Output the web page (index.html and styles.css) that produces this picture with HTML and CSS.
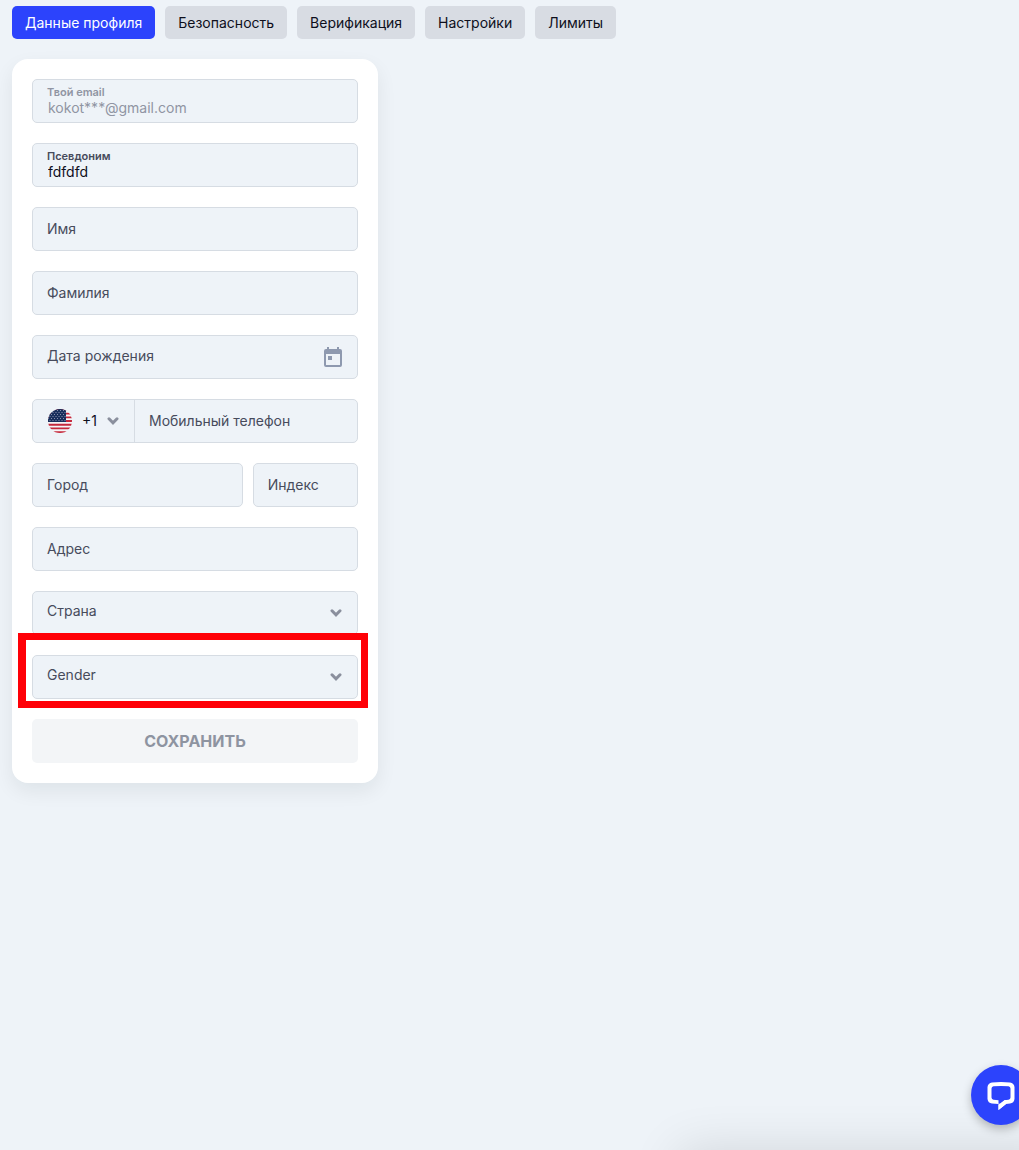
FILE: index.html
```html
<!DOCTYPE html>
<html lang="ru">
<head>
<meta charset="utf-8">
<meta name="viewport" content="width=device-width, initial-scale=1">
<title>Данные профиля</title>
<link rel="stylesheet" href="styles.css">
</head>
<body>
<nav class="tabs" aria-label="Профиль">
  <button type="button" class="tab tab-active">Данные профиля</button>
  <button type="button" class="tab">Безопасность</button>
  <button type="button" class="tab">Верификация</button>
  <button type="button" class="tab">Настройки</button>
  <button type="button" class="tab">Лимиты</button>
</nav>
<main>
  <form class="card">
    <div class="field filled disabled">
      <label for="email">Твой email</label>
      <input id="email" type="text" value="kokot***@gmail.com" disabled>
    </div>
    <div class="field filled">
      <label for="nick">Псевдоним</label>
      <input id="nick" type="text" value="fdfdfd">
    </div>
    <div class="field">
      <label for="name">Имя</label>
      <input id="name" type="text">
    </div>
    <div class="field">
      <label for="surname">Фамилия</label>
      <input id="surname" type="text">
    </div>
    <div class="field field-date">
      <label for="birth">Дата рождения</label>
      <input id="birth" type="text">
      <svg class="icon-end" width="24" height="24" viewBox="0 0 24 24" fill="#8e99af" aria-hidden="true"><path d="M19 4h-1V2h-2v2H8V2H6v2H5a2 2 0 0 0-2 2v14a2 2 0 0 0 2 2h14a2 2 0 0 0 2-2V6a2 2 0 0 0-2-2zm0 16H5V9h14v11zM7 11h4v4H7z"/></svg>
    </div>
    <div class="phone">
      <div class="code">
        <svg class="flag" width="24" height="24" viewBox="0 0 24 24" aria-hidden="true">
          <defs>
            <clipPath id="round"><circle cx="12" cy="12" r="12"/></clipPath>
            <pattern id="stars" width="3" height="4" patternUnits="userSpaceOnUse"><path d="M0 1h1v1H0zM1.500 3h1v1h-1z" fill="#8790ad"/></pattern>
          </defs>
          <g clip-path="url(#round)">
            <path fill="#f5f5f7" d="M0 0h24v24H0z"/>
            <path stroke="#c5283c" stroke-width="1.850" d="M0 .920h24M0 4.610h24M0 8.300h24M0 12h24M0 15.700h24M0 19.390h24M0 23.080h24"/>
            <path fill="#192f5d" d="M0 0h18v12.900H0z"/>
            <path fill="url(#stars)" d="M0 0h18v12H0z"/>
          </g>
        </svg>
        <select aria-label="Код страны"><option>+1</option></select>
        <svg class="chevron" width="12" height="8" viewBox="0 0 12 8" aria-hidden="true"><path d="M2 1.800l4 4L10 1.800"/></svg>
      </div>
      <div class="number">
        <label for="tel">Мобильный телефон</label>
        <input id="tel" type="tel">
      </div>
    </div>
    <div class="row">
      <div class="field">
        <label for="city">Город</label>
        <input id="city" type="text">
      </div>
      <div class="field">
        <label for="zip">Индекс</label>
        <input id="zip" type="text">
      </div>
    </div>
    <div class="field">
      <label for="address">Адрес</label>
      <input id="address" type="text">
    </div>
    <div class="field field-select">
      <label for="country">Страна</label>
      <select id="country"><option value=""></option></select>
      <svg class="chevron icon-end" width="12" height="8" viewBox="0 0 12 8" aria-hidden="true"><path d="M2 1.800l4 4L10 1.800"/></svg>
    </div>
    <div class="field field-select highlighted">
      <label for="gender">Gender</label>
      <select id="gender"><option value=""></option></select>
      <svg class="chevron icon-end" width="12" height="8" viewBox="0 0 12 8" aria-hidden="true"><path d="M2 1.800l4 4L10 1.800"/></svg>
    </div>
    <button type="submit" class="save" disabled>СОХРАНИТЬ</button>
  </form>
</main>
<div class="chat-window"></div>
<button type="button" class="chat" aria-label="Чат">
  <svg width="28" height="30" viewBox="0 0 28 30" aria-hidden="true">
    <path fill="#fff" fill-rule="evenodd" d="M5 1.500Q14 .500 23 1.500Q27 2 27.500 6V18Q27 22 23 22.500L19 23L11.500 29V23L5 22.500Q1 22 .500 18V6Q1 2 5 1.500ZM6.500 5.300Q14 4.500 21.500 5.300Q23.400 5.500 23.500 7.500V16.500Q23.400 18.500 21.500 18.800L17.500 19.200L11.500 24V19.200L6.500 18.800Q4.600 18.500 4.500 16.500V7.500Q4.600 5.500 6.500 5.300Z"/>
    <path fill="#fff" d="M11.500 22.500v6.500l7.500-6v-4l-1.500 .200L13 22.800Z"/>
  </svg>
</button>
</body>
</html>
```
FILE: styles.css
```css
* {
  box-sizing: border-box;
}

body {
  margin: 0;
  min-height: 100vh;
  padding: 6px 12px;
  background: #eef3f8;
  color: #0e0f1c;
  font: 14px/20px Inter, "Liberation Sans", sans-serif;
}

button,
input,
select {
  font: inherit;
  color: inherit;
}

.tabs {
  display: flex;
  flex-wrap: wrap;
  gap: 10px;
  margin-bottom: 20px;
}

.tab {
  padding: 7px 13px 6px;
  border: 0;
  border-radius: 5px;
  background: #d8dce3;
}

.tab-active {
  background: #2c43fc;
  color: #fff;
}

.card {
  display: flex;
  flex-direction: column;
  gap: 20px;
  max-width: 366px;
  padding: 20px;
  border-radius: 16px;
  background: #fff;
  box-shadow: 0 8px 20px rgba(20, 30, 30, .07);
}

.field,
.phone {
  border: 1px solid #d6dce3;
  border-radius: 5px;
  background: #eef3f8;
}

.field,
.number {
  display: grid;
  align-items: center;
  min-width: 0;
  min-height: 44px;
}

.number {
  min-height: 42px;
}

.field > *,
.number > * {
  grid-area: 1 / 1;
}

.field label,
.number label {
  padding: 0 14px;
  color: #474b5c;
  pointer-events: none;
}

.field input,
.field select,
.number input {
  align-self: stretch;
  width: 100%;
  min-width: 0;
  padding: 0 14px;
  border: 0;
  background: transparent;
  appearance: none;
}

.field.filled label {
  align-self: start;
  padding-top: 4px;
  font-size: 11px;
  line-height: 16px;
  font-weight: 600;
}

.field.filled input {
  padding: 16px 15px 2px;
}

.field.disabled label,
.field.disabled input {
  color: #9095a3;
}

.icon-end {
  justify-self: end;
  margin-right: 12px;
  pointer-events: none;
}

.field-select .icon-end {
  margin-right: 15px;
}

.field.field-date label {
  padding-bottom: 2px;
}

.field.field-select label {
  padding-bottom: 4px;
}

.chevron path {
  fill: none;
  stroke: #8a8f9d;
  stroke-width: 3;
  stroke-linecap: round;
  stroke-linejoin: miter;
}

.phone {
  display: flex;
}

.code {
  display: flex;
  align-items: center;
  gap: 10px;
  padding: 0 15px;
  border-right: 1px solid #d6dce3;
}

.code select {
  padding: 0;
  border: 0;
  background: transparent;
  appearance: none;
}

.number {
  flex: 1;
}

.row {
  display: grid;
  grid-template-columns: 2fr 1fr;
  gap: 10px;
}

.highlighted {
  position: relative;
}

.highlighted::after {
  content: "";
  position: absolute;
  inset: -23px -11px -10px -15px;
  border: 7px solid #ff0007;
  border-left-width: 8px;
  pointer-events: none;
}

.save {
  min-height: 44px;
  border: 0;
  border-radius: 5px;
  background: #f3f5f7;
  color: #8e94a1;
  font-size: 16px;
  font-weight: 700;
}

.chat {
  position: fixed;
  right: -12px;
  bottom: 25px;
  display: grid;
  place-items: center;
  width: 60px;
  height: 60px;
  padding: 2px 0 0;
  border: 0;
  border-radius: 50%;
  background: #2c43fc;
  box-shadow: 0 4px 10px rgba(0, 0, 0, .25);
}

/* Collapsed chat panel: only its shadow reaches into view */
.chat-window {
  position: fixed;
  top: 100%;
  right: -40px;
  width: 380px;
  height: 80px;
  box-shadow: 0 0 50px rgba(0, 0, 0, .12);
}
```
